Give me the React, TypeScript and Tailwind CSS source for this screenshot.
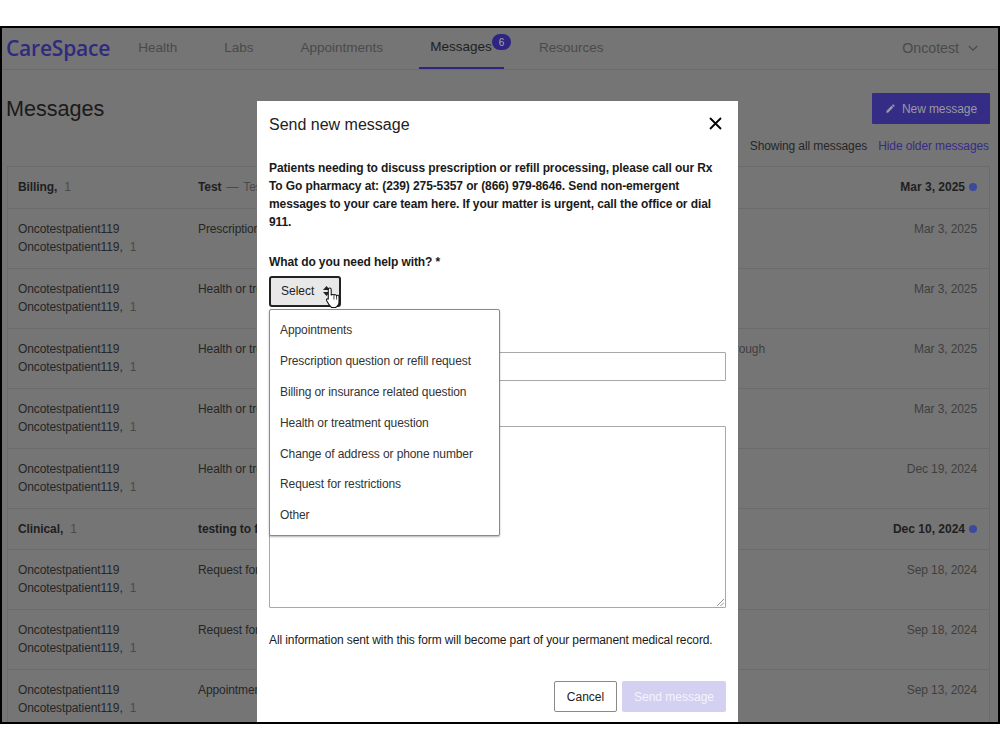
const font = { fontFamily: '"Liberation Sans", Arial, sans-serif' };

type Row = { from: string; subject: string; tail?: string; date: string };

const options = [
  'Appointments',
  'Prescription question or refill request',
  'Billing or insurance related question',
  'Health or treatment question',
  'Change of address or phone number',
  'Request for restrictions',
  'Other',
];

const firstRows: Row[] = [
  { from: 'Oncotestpatient119', subject: 'Prescription question or refill request', date: 'Mar 3, 2025' },
  { from: 'Oncotestpatient119', subject: 'Health or treatment question', date: 'Mar 3, 2025' },
  { from: 'Oncotestpatient119', subject: 'Health or treatment question', tail: 'through', date: 'Mar 3, 2025' },
  { from: 'Oncotestpatient119', subject: 'Health or treatment question', date: 'Mar 3, 2025' },
  { from: 'Oncotestpatient119', subject: 'Health or treatment question', date: 'Dec 19, 2024' },
];

const secondRows: Row[] = [
  { from: 'Oncotestpatient119', subject: 'Request for restrictions', date: 'Sep 18, 2024' },
  { from: 'Oncotestpatient119', subject: 'Request for restrictions', date: 'Sep 18, 2024' },
  { from: 'Oncotestpatient119', subject: 'Appointments', date: 'Sep 13, 2024' },
];

function UnreadRow({ who, subject, preview, date, height }: { who: string; subject: string; preview?: string; date: string; height: string }) {
  return (
    <div className={`flex items-center border-b border-[#6b6b6b] pb-[1px] pl-[10px] pr-[12px] text-[12px] tracking-[-0.1px] text-[#1f1f1f] ${height}`}>
      <div className="w-[180px] shrink-0">
        <span className="font-bold">{who},</span>
        <span className="ml-[7px] text-[#4a4a4a]">1</span>
      </div>
      <div className="flex-1 truncate font-bold">
        {subject}
        {preview && (
          <span className="font-normal text-[#4a4a4a]">
            <span className="mx-[5px]">—</span>
            {preview}
          </span>
        )}
      </div>
      <span className="font-bold tracking-normal">{date}</span>
      <span className="ml-[4px] h-[8px] w-[8px] rounded-full bg-[#3b4a9e]" />
    </div>
  );
}

function MessageRow({ row }: { row: Row }) {
  return (
    <div className="flex h-[60px] border-b border-[#6b6b6b] pl-[10px] pr-[12px] pt-[11px] text-[12px] leading-[18px] tracking-[-0.1px] text-[#262626]">
      <div className="w-[180px] shrink-0">
        <div>{row.from}</div>
        <div>
          {row.from},<span className="ml-[7px] text-[#4a4a4a]">1</span>
        </div>
      </div>
      <div className="flex-1">
        <div className="flex w-[567px] justify-between whitespace-nowrap">
          <span>{row.subject}</span>
          {row.tail && <span className="text-[#3f3f3f]">{row.tail}</span>}
        </div>
      </div>
      <span className="text-[#3f3f3f]">{row.date}</span>
    </div>
  );
}

function Nav() {
  return (
    <div className="flex h-[42px] items-center border-b border-[#6b6b6b] text-[13.5px] text-[#4a4a4a]">
      <span className="ml-[4px] text-[21px] font-semibold tracking-[-0.2px] text-[#2f2a7e]" style={{ fontFamily: '"Open Sans", sans-serif' }}>
        CareSpace
      </span>
      <span className="ml-[28px]">Health</span>
      <span className="ml-[47px]">Labs</span>
      <span className="ml-[47px]">Appointments</span>
      <div className="relative ml-[36px] flex h-[41px] w-[85px] items-center justify-center border-b-2 border-[#2d2580] pr-[1px] text-[#1f1f1f]">
        <span>Messages</span>
        <span className="absolute left-[73px] top-[6px] flex h-[16px] w-[19px] items-center justify-center rounded-full bg-[#2d2580] text-[10px] text-[#a9a9a9]">
          6
        </span>
      </div>
      <span className="ml-[35px]">Resources</span>
      <span className="ml-auto text-[14.2px]">Oncotest</span>
      <svg className="ml-[9px] mr-[20px] h-[7px] w-[10px]" viewBox="0 0 10 7" fill="none" stroke="#4a4a4a" strokeWidth="1.2">
        <path d="M0.8 1l4.2 4.2L9.200 1" />
      </svg>
    </div>
  );
}

function Background() {
  return (
    <div className="h-full bg-[#757575]">
      <Nav />
      <div className="mr-[8px] mt-[23px] flex h-[31px] items-center justify-between pl-[4px]">
        <h1 className="pt-[2px] text-[21.6px] text-[#1a1a1a]">Messages</h1>
        <button className="flex h-[31px] w-[118px] items-center justify-center gap-[6px] rounded-[1px] bg-[#352c86] text-[12px] tracking-[-0.1px] text-[#9a9a9a]">
          <svg className="h-[11px] w-[11px]" viewBox="0 0 24 24" fill="#9a9a9a">
            <path d="M3 17.250V21h3.750L17.810 9.940l-3.750-3.750L3 17.250zM20.710 7.040c.390-.390.390-1.020 0-1.410l-2.340-2.340c-.390-.390-1.020-.390-1.410 0l-1.830 1.830 3.750 3.750 1.830-1.830z" />
          </svg>
          New message
        </button>
      </div>
      <div className="mr-[9px] mt-[13px] flex h-[18px] items-center justify-end gap-[11px] text-[12px] tracking-[-0.1px]">
        <span className="text-[#262626]">Showing all messages</span>
        <span className="text-[#352c86]">Hide older messages</span>
      </div>
      <div className="ml-[5px] mr-[8px] mt-[11px] border-x border-t border-[#6b6b6b]">
        <UnreadRow who="Billing" subject="Test" preview="Test" date="Mar 3, 2025" height="h-[42px]" />
        {firstRows.map((row, i) => (
          <MessageRow key={i} row={row} />
        ))}
        <UnreadRow who="Clinical" subject="testing to f" date="Dec 10, 2024" height="h-[41px]" />
        {secondRows.map((row, i) => (
          <MessageRow key={i} row={row} />
        ))}
      </div>
    </div>
  );
}

function SelectMenu() {
  return (
    <div className="absolute left-[12px] top-[208px] z-10 w-[231px] rounded-[2px] border border-[#8a8a8a] bg-white pb-[4px] pt-[5px] text-[12px] tracking-[-0.1px] text-[#333] shadow-[0_1px_2px_rgba(0,0,0,0.3)]">
      {options.map((o) => (
        <div key={o} className="flex h-[30.8px] items-center pl-[10px]">
          {o}
        </div>
      ))}
    </div>
  );
}

function Modal() {
  return (
    <div className="absolute bottom-0 left-[255px] top-[73px] w-[481px] overflow-hidden bg-white px-[12px] text-[12px] text-[#1a1a1a]">
      <div className="flex h-[46px] items-center justify-between pt-[1px]">
        <h2 className="text-[16px] text-[#222]">Send new message</h2>
        <svg className="mb-[3px] mr-[4px] h-[13px] w-[13px]" viewBox="0 0 13 13" stroke="#000" strokeWidth="1.800" fill="none">
          <path d="M1 1l11 11M12 1L1 12" />
        </svg>
      </div>
      <p className="mt-[12px] font-bold leading-[18px] tracking-[-0.1px]">
        Patients needing to discuss prescription or refill processing, please call our Rx To Go pharmacy at: (239) 275-5357 or (866) 979-8646. Send non-emergent messages to your care team here. If your matter is urgent, call the office or dial 911.
      </p>
      <div className="mt-[22px] font-bold leading-[18px] tracking-[-0.1px]">What do you need help with? *</div>
      <div className="relative mt-[5px] h-[31px]">
        <button className="flex h-[31px] w-[72px] items-center rounded-[3px] border-2 border-[#222] bg-[#e8e8e8] pb-[1px] pl-[10px] text-[#222]">
          Select
          <svg className="ml-[9px] h-[10px] w-[7px]" viewBox="0 0 7 10" fill="#222">
            <path d="M3.500 0L7 4H0zM3.500 10L0 6h7z" />
          </svg>
        </button>
        <svg className="absolute left-[56px] top-[11px] z-20 h-[21px] w-[16px]" viewBox="0 0 15 20" fill="#fff" stroke="#111" strokeWidth="1">
          <path d="M3 2.500c0-2 2.800-2 2.800 0V8c.3-1.200 2.400-1.200 2.600 0 .3-1 2.300-1 2.500.3.400-.8 2.300-.6 2.300 1v4.700c0 2.500-1.500 4.500-3.200 5.500H6c-1.200-1.200-3-3.500-4.500-6.500C.8 11.500 2.200 10.500 3 12z" />
          <path d="M8.400 8.500v3.500M10.900 8.800v3.200" strokeWidth="0.700" />
        </svg>
      </div>
      <SelectMenu />
      <div className="mt-[45px] h-[29px] rounded-[1px] border border-[#a8a8a8]" />
      <div className="relative mt-[45px] h-[182px] rounded-[1px] border border-[#a8a8a8]">
        <svg className="absolute bottom-[1px] right-[1px] h-[7px] w-[7px]" viewBox="0 0 7 7" stroke="#777" strokeWidth="0.800">
          <path d="M0 7l7-7M3.500 7L7 3.500" />
        </svg>
      </div>
      <p className="mt-[23px] leading-[18px] tracking-[-0.1px]">All information sent with this form will become part of your permanent medical record.</p>
      <div className="mt-[32px] flex justify-end gap-[5px]">
        <button className="h-[31px] w-[63px] rounded-[2px] border border-[#8a8a8a] bg-white text-[#222]">Cancel</button>
        <button className="h-[31px] w-[104px] rounded-[2px] bg-[#d4d0f2] text-[#f4f3fc]">Send message</button>
      </div>
    </div>
  );
}

export default function App() {
  return (
    <div className="h-[750px] w-[1000px] overflow-hidden bg-white pt-[26px]" style={font}>
      <div className="relative h-[698px] w-full overflow-hidden border-2 border-black">
        <Background />
        <Modal />
      </div>
    </div>
  );
}
